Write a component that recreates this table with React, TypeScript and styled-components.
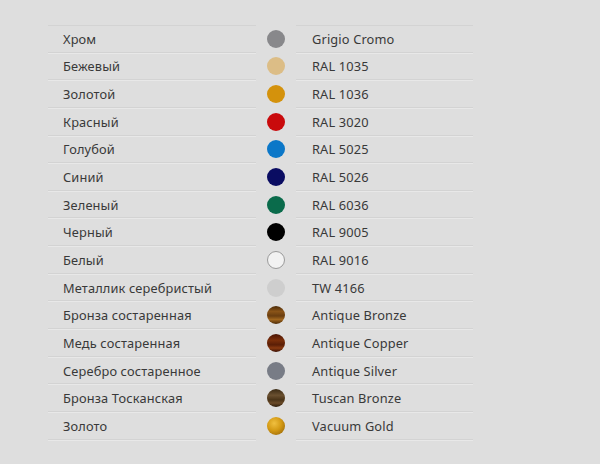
import React from "react";
import styled, { createGlobalStyle } from "styled-components";

const Global = createGlobalStyle`
  html, body { margin: 0; padding: 0; background: #dedede; }
  body { font-family: "Noto Sans", "Open Sans", sans-serif; }
`;

const Page = styled.div`
  width: 600px;
  height: 464px;
  background: #dedede;
  padding: 25px 0 0 48px;
  box-sizing: border-box;
`;

const Table = styled.div`
  display: grid;
  grid-template-columns: 208px 40px 177px;
  grid-auto-rows: 27.65px;
`;

const Cell = styled.div<{ $top?: boolean; $pad: number }>`
  display: flex;
  align-items: center;
  padding: 1px 0 0 ${(p) => p.$pad}px;
  font-size: 12.8px;
  color: #393939;
  letter-spacing: 0.15px;
  border-bottom: 1px solid #d3d3d3;
  box-shadow: 0 1px 0 #e8e8e8;
  ${(p) => (p.$top ? "border-top: 1px solid #d3d3d3;" : "")}
  box-sizing: border-box;
  white-space: nowrap;
`;

const SwatchCell = styled.div`
  display: flex;
  align-items: center;
  justify-content: center;
`;

const Swatch = styled.span<{ $bg: string; $ring?: boolean }>`
  width: 18px;
  height: 18px;
  border-radius: 50%;
  background: ${(p) => p.$bg};
  box-sizing: border-box;
  ${(p) => (p.$ring ? "border: 1px solid #9a9a9a;" : "")}
`;

type Row = { ru: string; code: string; bg: string; ring?: boolean };

const rows: Row[] = [
  { ru: "Хром", code: "Grigio Cromo", bg: "#88888b" },
  { ru: "Бежевый", code: "RAL 1035", bg: "#dcbd86" },
  { ru: "Золотой", code: "RAL 1036", bg: "#d4920c" },
  { ru: "Красный", code: "RAL 3020", bg: "#c90a0c" },
  { ru: "Голубой", code: "RAL 5025", bg: "#0b77c8" },
  { ru: "Синий", code: "RAL 5026", bg: "#0a0c62" },
  { ru: "Зеленый", code: "RAL 6036", bg: "#0a6b4b" },
  { ru: "Черный", code: "RAL 9005", bg: "#000000" },
  { ru: "Белый", code: "RAL 9016", bg: "#f2f2f2", ring: true },
  { ru: "Металлик серебристый", code: "TW 4166", bg: "#cecece" },
  {
    ru: "Бронза состаренная",
    code: "Antique Bronze",
    bg: "linear-gradient(180deg, #4a2a08 0%, #8a5418 30%, #6a3e10 55%, #a0661e 75%, #4a2a08 100%)",
  },
  {
    ru: "Медь состаренная",
    code: "Antique Copper",
    bg: "linear-gradient(180deg, #4a1404 0%, #7a2e0a 35%, #5a1e06 60%, #8a3a10 78%, #3a1004 100%)",
  },
  { ru: "Серебро состаренное", code: "Antique Silver", bg: "#787c86" },
  {
    ru: "Бронза Тосканская",
    code: "Tuscan Bronze",
    bg: "linear-gradient(180deg, #3a2a14 0%, #6a5030 35%, #4a3418 60%, #6a4a28 78%, #2a1a08 100%)",
  },
  {
    ru: "Золото",
    code: "Vacuum Gold",
    bg: "radial-gradient(circle at 40% 35%, #f0c040 0%, #d49a14 45%, #8a5a04 100%)",
  },
];

export default function App() {
  return (
    <Page>
      <Global />
      <Table>
        {rows.map((r, i) => (
          <React.Fragment key={r.code}>
            <Cell $top={i === 0} $pad={15}>{r.ru}</Cell>
            <SwatchCell>
              <Swatch $bg={r.bg} $ring={r.ring} />
            </SwatchCell>
            <Cell $top={i === 0} $pad={16}>{r.code}</Cell>
          </React.Fragment>
        ))}
      </Table>
    </Page>
  );
}
